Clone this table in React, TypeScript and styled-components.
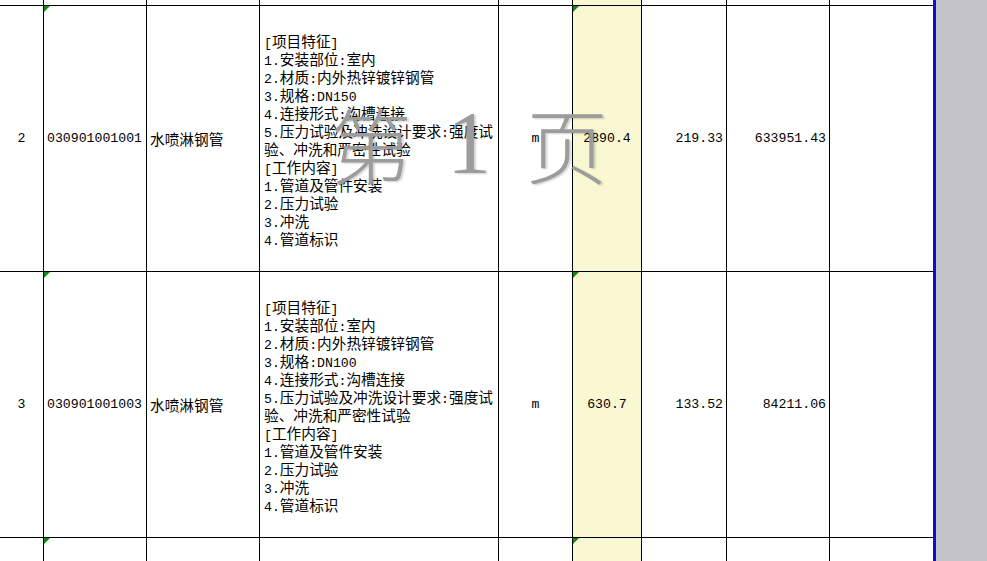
import React from "react";
import styled, { createGlobalStyle, css } from "styled-components";

const Global = createGlobalStyle`
  html, body { margin: 0; padding: 0; background: #ffffff; overflow: hidden; }
  #root { width: 987px; height: 561px; }
`;

const Page = styled.div`
  display: flex;
  width: 987px;
  height: 561px;
  overflow: hidden;
  font-family: "Noto Sans CJK SC", sans-serif;
  color: #000;
`;

const Sheet = styled.div`
  position: relative;
  width: 933px;
  height: 561px;
  overflow: hidden;
  display: grid;
  grid-template-columns: 43px 102px 112px 238px 73px 68px 84px 102px 103px;
  grid-template-rows: 5px 265px 265px 60px;
  gap: 1px;
  background: #000;
`;

const PageBreak = styled.div`
  width: 3px;
  height: 561px;
  background: #0a0fd0;
`;

const OutsideArea = styled.div`
  flex: 1;
  height: 561px;
  background: #c3c2c6;
`;

type Align = "left" | "center" | "right";

const Cell = styled.div<{ $align?: Align; $yellow?: boolean; $mark?: boolean }>`
  position: relative;
  display: flex;
  align-items: center;
  justify-content: ${(p) =>
    p.$align === "right" ? "flex-end" : p.$align === "center" ? "center" : "flex-start"};
  padding: 0 ${(p) => (p.$align === "right" ? "3px" : "0")} 0
    ${(p) => (p.$align === "left" ? "3px" : "0")};
  background: ${(p) => (p.$yellow ? "#faf8d3" : "#ffffff")};
  font-size: 14.67px;
  white-space: nowrap;
  overflow: hidden;
  ${(p) =>
    p.$mark &&
    css`
      &::before {
        content: "";
        position: absolute;
        left: 0;
        top: 0;
        width: 0;
        height: 0;
        border-top: 6px solid #0c8a12;
        border-right: 6px solid transparent;
      }
    `}
`;

const Desc = styled.div`
  display: flex;
  flex-direction: column;
  padding: 3px 0 0 1px;
`;

const Line = styled.div`
  height: 18px;
  line-height: 18px;
  font-size: 14.67px;
  white-space: nowrap;
`;

const Asc = styled.span`
  font-family: "Liberation Mono", monospace;
  font-size: 13.2px;
`;

const Watermark = styled.div`
  position: absolute;
  left: 328px;
  top: 88px;
  display: flex;
  align-items: center;
  color: #9c9c9c;
  text-shadow: 2px 1px 2px rgba(0, 0, 0, 0.18);
  pointer-events: none;
`;

const WmChar = styled.span<{ $w: number; $serif?: boolean }>`
  display: inline-block;
  width: ${(p) => p.$w}px;
  font-family: ${(p) =>
    p.$serif ? '"Liberation Serif", serif' : '"Noto Sans CJK SC", sans-serif'};
  font-weight: 300;
  font-size: ${(p) => (p.$serif ? 88 : 82)}px;
  line-height: 110px;
  text-align: center;
`;

function mixed(text: string) {
  return text.split(/([\x00-\x7F]+)/).map((part, i) =>
    part === "" ? null : /^[\x00-\x7F]+$/.test(part) ? (
      <Asc key={i}>{part}</Asc>
    ) : (
      <React.Fragment key={i}>{part}</React.Fragment>
    )
  );
}

type Item = {
  no: string;
  code: string;
  name: string;
  spec: string;
  unit: string;
  qty: string;
  price: string;
  total: string;
};

const items: Item[] = [
  {
    no: "2",
    code: "030901001001",
    name: "水喷淋钢管",
    spec: "DN150",
    unit: "m",
    qty: "2890.4",
    price: "219.33",
    total: "633951.43",
  },
  {
    no: "3",
    code: "030901001003",
    name: "水喷淋钢管",
    spec: "DN100",
    unit: "m",
    qty: "630.7",
    price: "133.52",
    total: "84211.06",
  },
];

function descLines(spec: string) {
  return [
    "[项目特征]",
    "1.安装部位:室内",
    "2.材质:内外热锌镀锌钢管",
    `3.规格:${spec}`,
    "4.连接形式:沟槽连接",
    "5.压力试验及冲洗设计要求:强度试",
    "验、冲洗和严密性试验",
    "[工作内容]",
    "1.管道及管件安装",
    "2.压力试验",
    "3.冲洗",
    "4.管道标识",
  ];
}

function EmptyRow({ mark }: { mark: boolean }) {
  return (
    <>
      <Cell />
      <Cell $mark={mark} />
      <Cell />
      <Cell />
      <Cell />
      <Cell $yellow $mark={mark} />
      <Cell />
      <Cell />
      <Cell />
    </>
  );
}

export default function App() {
  return (
    <>
      <Global />
      <Page>
        <Sheet>
          <EmptyRow mark={false} />
          {items.map((it) => (
            <React.Fragment key={it.code}>
              <Cell $align="center">
                <Asc>{it.no}</Asc>
              </Cell>
              <Cell $align="left" $mark>
                <Asc>{it.code}</Asc>
              </Cell>
              <Cell $align="left">{it.name}</Cell>
              <Cell $align="left">
                <Desc>
                  {descLines(it.spec).map((l, i) => (
                    <Line key={i}>{mixed(l)}</Line>
                  ))}
                </Desc>
              </Cell>
              <Cell $align="center">
                <Asc>{it.unit}</Asc>
              </Cell>
              <Cell $align="center" $yellow $mark>
                <Asc>{it.qty}</Asc>
              </Cell>
              <Cell $align="right">
                <Asc>{it.price}</Asc>
              </Cell>
              <Cell $align="right">
                <Asc>{it.total}</Asc>
              </Cell>
              <Cell />
            </React.Fragment>
          ))}
          <EmptyRow mark />
          <Watermark>
            <WmChar $w={86}>第</WmChar>
            <WmChar $w={110} $serif>
              1
            </WmChar>
            <WmChar $w={86}>页</WmChar>
          </Watermark>
        </Sheet>
        <PageBreak />
        <OutsideArea />
      </Page>
    </>
  );
}
